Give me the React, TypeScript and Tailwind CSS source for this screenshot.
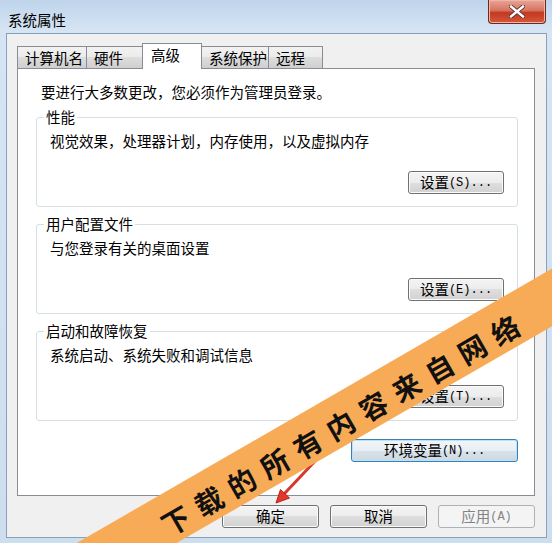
import type { ReactNode } from 'react';

const btnBase =
  'h-[23px] flex items-center justify-center rounded-[3px] border text-[14.5px] leading-none';
const btnNormal =
  'border-[#707070] text-black bg-[linear-gradient(to_bottom,#f4f4f4_0%,#ececec_50%,#dedede_50%,#d2d2d2_100%)] shadow-[inset_0_0_0_1px_#fbfbfb]';
const btnFocus =
  'border-[#3c7fb1] text-black bg-[linear-gradient(to_bottom,#f2f6f9_0%,#e8eef3_50%,#d8e2ea_50%,#cdd9e3_100%)] shadow-[inset_0_0_0_1px_#b9e1f8]';
const btnDisabled = 'border-[#adb2b5] text-[#838383] bg-[#f4f4f4]';

function Mono({ children }: { children: ReactNode }) {
  return <span className="font-['Liberation_Mono',monospace] text-[12px]">{children}</span>;
}

function Button({
  children,
  width,
  variant = 'normal',
}: {
  children: ReactNode;
  width: string;
  variant?: 'normal' | 'focus' | 'disabled';
}) {
  const look = variant === 'focus' ? btnFocus : variant === 'disabled' ? btnDisabled : btnNormal;
  return <button className={`${btnBase} ${look} ${width}`}>{children}</button>;
}

interface Group {
  title: string;
  text: string;
  key: string;
}

const groups: Group[] = [
  { title: '性能', text: '视觉效果，处理器计划，内存使用，以及虚拟内存', key: 'S' },
  { title: '用户配置文件', text: '与您登录有关的桌面设置', key: 'E' },
  { title: '启动和故障恢复', text: '系统启动、系统失败和调试信息', key: 'T' },
];

const tabs = [
  { label: '计算机名', w: 'w-[70px]' },
  { label: '硬件', w: 'w-[57px]' },
  { label: '高级', w: 'w-[60px]', active: true },
  { label: '系统保护', w: 'w-[68px]' },
  { label: '远程', w: 'w-[55px]' },
];

const bannerChars = ['下', '载', '的', '所', '有', '内', '容', '来', '自', '网', '络'];

export default function App() {
  return (
    <div className="relative w-[552px] h-[543px] overflow-hidden bg-[linear-gradient(to_bottom,#bfd4eb_0px,#d6e5f4_32px,#cddeef_100%)] font-['Noto_Sans_CJK_SC',sans-serif] text-black">
      {/* title bar */}
      <div className="h-[33px] flex justify-between">
        <span className="mt-[11px] ml-[8px] text-[14.5px] leading-[18px] text-black">系统属性</span>
        <div className="mr-[6px] w-[58px] h-[24px] rounded-b-[4px] border border-t-0 border-[#6a2a22] bg-[linear-gradient(to_bottom,#e8a597_0%,#d77462_45%,#c2391f_55%,#d4583c_100%)] shadow-[inset_0_0_0_1px_#f0b4a8] flex items-center justify-center">
          <svg width="16" height="13" viewBox="0 0 16 13">
            <path d="M2 1.5 L14 11.5 M14 1.5 L2 11.5" stroke="#5a2a25" strokeWidth="4.2" strokeLinecap="square" />
            <path d="M2 1.5 L14 11.5 M14 1.5 L2 11.5" stroke="#ffffff" strokeWidth="2.4" strokeLinecap="square" />
          </svg>
        </div>
      </div>

      {/* client area */}
      <div className="ml-[6px] mr-[5px] border border-[#8aa0ba] bg-[#f0f0f0] pt-[9px] pl-[10px] pr-[11px] pb-[9px] flex flex-col">
        {/* tabs */}
        <div className="h-[25px] flex items-end">
          {tabs.map((t, i) =>
            t.active ? (
              <div
                key={t.label}
                className={`${t.w} relative z-10 -mb-px h-[26px] -ml-px border border-b-0 border-[#898c95] bg-white pl-[8px] pt-[1px] text-[14.5px] leading-[20px]`}
              >
                {t.label}
              </div>
            ) : (
              <div
                key={t.label}
                className={`${t.w} h-[22px] ${i > 0 ? '-ml-px' : ''} border border-b-0 border-[#898c95] bg-[linear-gradient(to_bottom,#f2f2f2_0%,#ebebeb_50%,#dddddd_50%,#cfcfcf_100%)] pl-[7px] text-[14.5px] leading-[21px]`}
              >
                {t.label}
              </div>
            ),
          )}
        </div>

        {/* tab panel */}
        <div className="h-[428px] border border-[#898c95] bg-white flex flex-col">
          <p className="mt-[14px] ml-[23px] text-[14.5px] leading-[18px]">
            要进行大多数更改，您必须作为管理员登录。
          </p>
          <div className="mt-[16px] ml-[18px] w-[482px] flex flex-col gap-[17px]">
            {groups.map((g) => (
              <div
                key={g.title}
                className="relative h-[90px] rounded-[3px] border border-[#d5dfe5] pt-[14px] pl-[13px] pr-[13px] pb-[12px] flex flex-col justify-between"
              >
                <span className="absolute left-[7px] -top-[10px] bg-white px-[2px] text-[14.5px] leading-[18px]">
                  {g.title}
                </span>
                <p className="text-[14.5px] leading-[18px]">{g.text}</p>
                <div className="self-end">
                  <Button width="w-[96px]">
                    设置<Mono>({g.key})...</Mono>
                  </Button>
                </div>
              </div>
            ))}
            <div className="self-end mt-[1px]">
              <Button width="w-[167px]" variant="focus">
                环境变量<Mono>(N)...</Mono>
              </Button>
            </div>
          </div>
        </div>

        {/* dialog buttons */}
        <div className="mt-[9px] flex justify-end gap-[11px]">
          <Button width="w-[97px]">确定</Button>
          <Button width="w-[97px]">取消</Button>
          <Button width="w-[97px]" variant="disabled">
            应用<Mono>(A)</Mono>
          </Button>
        </div>
      </div>

      {/* red arrow */}
      <svg className="absolute left-0 top-0 pointer-events-none" width="552" height="543">
        <path d="M318 458 L285 493" stroke="#d9362c" strokeWidth="3" strokeLinecap="round" />
        <path d="M276 503 L280.5 489.5 L289.5 498 Z" fill="#e1372c" stroke="#b8241c" strokeWidth="1" strokeLinejoin="round" />
      </svg>

      {/* watermark banner */}
      <div className="absolute left-[-62px] top-[396px] w-[800px] h-[50px] -rotate-[30deg] bg-[#f8ab56] flex items-center justify-center gap-[10px] pt-[8px] pointer-events-none">
        {bannerChars.map((c, i) => (
          <span key={i} className="text-[28px] leading-none font-bold text-[#111]">
            {c}
          </span>
        ))}
      </div>
    </div>
  );
}
